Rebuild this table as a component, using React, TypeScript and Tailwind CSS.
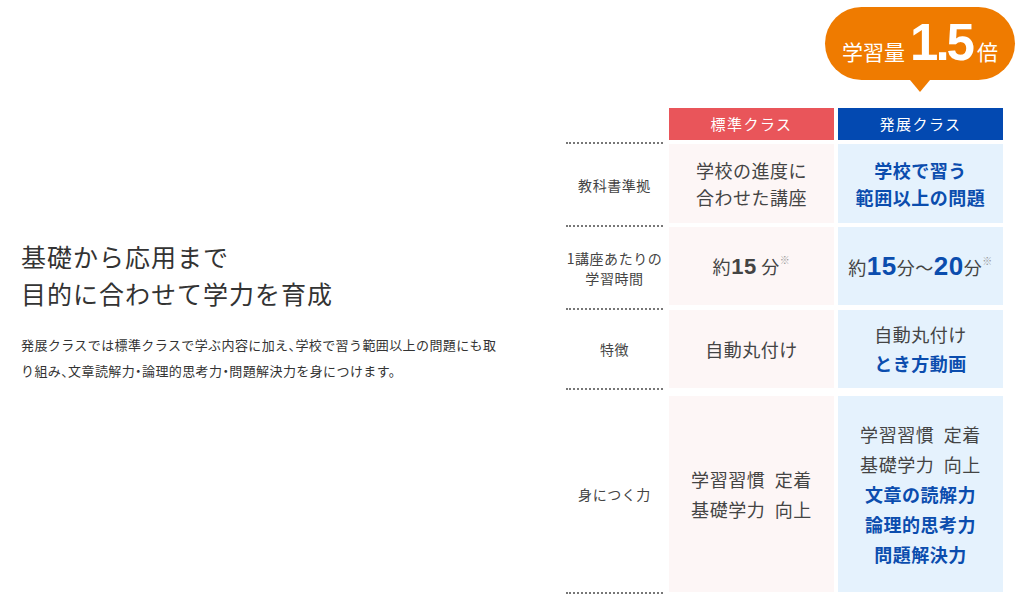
import type { ReactNode } from "react";

const labelCls =
  "w-[97px] mr-[6px] flex items-center justify-center text-center border-b-2 border-dotted border-[#777] text-[14px] leading-[20px] tracking-[0.04em] text-[#444]";
const stdCls =
  "w-[165px] flex flex-col items-center justify-center text-center bg-[#fdf6f6] text-[18px] text-[#444] tracking-[0.03em]";
const advCls =
  "ml-[4px] w-[165px] flex flex-col items-center justify-center text-center bg-[#e5f2fd] text-[18px] text-[#444] tracking-[0.03em]";

interface RowProps {
  label?: ReactNode;
  box: string;
  std: ReactNode;
  adv: ReactNode;
  className?: string;
}

function Row({ label, box, std, adv, className = "" }: RowProps) {
  return (
    <div className={`flex ${className}`}>
      <div className={labelCls}>{label}</div>
      <div className={`${stdCls} ${box}`}>{std}</div>
      <div className={`${advCls} ${box}`}>{adv}</div>
    </div>
  );
}

const Num = ({ children, big }: { children: ReactNode; big?: boolean }) => (
  <span
    className={`[font-family:'Liberation_Sans',sans-serif] font-bold ${
      big ? "text-[26px] text-[#0b4dae]" : "text-[22px] text-[#444]"
    }`}
  >
    {children}
  </span>
);

const Note = () => (
  <span className="relative -top-[10px] text-[10px] text-[#999]">※</span>
);

export default function App() {
  return (
    <div className="flex w-[1021px] h-[599px] overflow-hidden bg-white pl-[21px] text-[#333] [font-family:'Noto_Sans_CJK_JP',sans-serif]">
      {/* left copy */}
      <section className="w-[545px] pt-[238px]">
        <h2 className="text-[25px] leading-[37px] font-normal tracking-[0.04em] text-[#333]">
          基礎から応用まで
          <br />
          目的に合わせて学力を育成
        </h2>
        {/* halt = half-width punctuation like the original copy */}
        <p className="mt-[20px] w-[488px] text-[13px] leading-[26px] tracking-[0.4px] text-[#333] [font-feature-settings:'halt']">
          発展クラスでは標準クラスで学ぶ内容に加え、学校で習う範囲以上の問題にも取り組み、文章読解力・論理的思考力・問題解決力を身につけます。
        </p>
      </section>

      {/* comparison table */}
      <section className="relative w-[437px] pt-[108px]">
        <div className="absolute left-[259px] top-[7px] flex h-[73px] w-[190px] items-baseline justify-center rounded-full bg-[#ef7b00] pt-[10px] text-white">
          <span className="text-[21px]">学習量</span>
          <span className="mx-[5px] text-[51px] font-bold leading-[52px] tracking-[-3px] [font-family:'Liberation_Sans',sans-serif]">
            1.5
          </span>
          <span className="text-[21px]">倍</span>
          <span className="absolute left-1/2 top-full -translate-x-1/2 border-l-[10px] border-r-[10px] border-t-[12px] border-l-transparent border-r-transparent border-t-[#ef7b00]" />
        </div>

        <div className="flex">
          <div className={labelCls} />
          <div className="mb-[4px] flex h-[32px] w-[165px] items-center justify-center bg-[#e9555a] text-[15px] tracking-[0.1em] text-white">
            標準クラス
          </div>
          <div className="mb-[4px] ml-[4px] flex h-[32px] w-[165px] items-center justify-center bg-[#0349b1] text-[15px] tracking-[0.1em] text-white">
            発展クラス
          </div>
        </div>

        <Row
          label="教科書準拠"
          box="h-[79px] mb-[4px] leading-[27px]"
          std={
            <>
              <span>学校の進度に</span>
              <span>合わせた講座</span>
            </>
          }
          adv={
            <>
              <span className="font-bold text-[#0b4dae]">学校で習う</span>
              <span className="font-bold text-[#0b4dae]">範囲以上の問題</span>
            </>
          }
        />

        <Row
          label={
            <span>
              1講座あたりの
              <br />
              学習時間
            </span>
          }
          box="h-[78px] mb-[5px]"
          std={
            <span className="whitespace-nowrap">
              約<Num>15</Num> 分<Note />
            </span>
          }
          adv={
            <span className="whitespace-nowrap">
              約<Num big>15</Num>分〜<Num big>20</Num>分<Note />
            </span>
          }
        />

        <Row
          label="特徴"
          box="h-[78px] mb-[2px] leading-[29px]"
          std={<span>自動丸付け</span>}
          adv={
            <>
              <span>自動丸付け</span>
              <span className="font-bold text-[#0b4dae]">とき方動画</span>
            </>
          }
        />

        <Row
          label="身につく力"
          className="mt-[6px]"
          box="h-[196px] mb-[2px] leading-[30px]"
          std={
            <>
              <span>学習習慣{"\u2002"}定着</span>
              <span>基礎学力{"\u2002"}向上</span>
            </>
          }
          adv={
            <>
              <span>学習習慣{"\u2002"}定着</span>
              <span>基礎学力{"\u2002"}向上</span>
              <span className="font-bold text-[#0b4dae]">文章の読解力</span>
              <span className="font-bold text-[#0b4dae]">論理的思考力</span>
              <span className="font-bold text-[#0b4dae]">問題解決力</span>
            </>
          }
        />
      </section>
    </div>
  );
}
